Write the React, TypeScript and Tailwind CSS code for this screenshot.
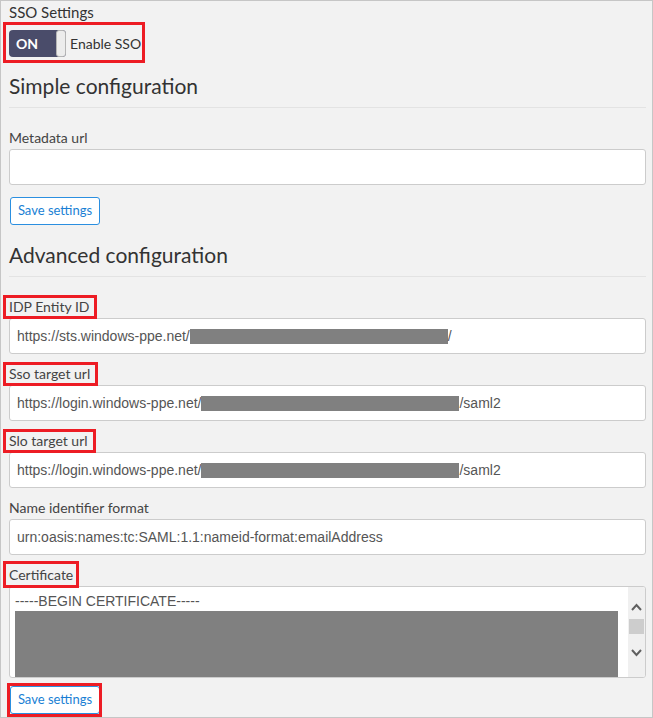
import type { ReactNode } from 'react';

const sans = { fontFamily: 'Lato, "Open Sans", sans-serif' };

// red annotation frame drawn over a label/control
const Mark = ({ children, className }: { children: ReactNode; className: string }) => (
  <span className="relative inline-flex">
    {children}
    <span className={`pointer-events-none absolute border-[3px] border-[#ed1c24] ${className}`} />
  </span>
);

const Redacted = ({ w }: { w: string }) => (
  <span className={`inline-block h-[15px] bg-[#808080] align-middle ${w}`} />
);

const fields = [
  { label: 'IDP Entity ID', prefix: 'https://sts.windows-ppe.net/', bar: 'w-[258px]', suffix: '/' },
  { label: 'Sso target url', prefix: 'https://login.windows-ppe.net/', bar: 'w-[258px]', suffix: '/saml2' },
  { label: 'Slo target url', prefix: 'https://login.windows-ppe.net/', bar: 'w-[258px]', suffix: '/saml2' },
];

const Label = ({ children }: { children: ReactNode }) => (
  <div className="h-[18px] text-[14px] leading-[18px] text-[#444]">{children}</div>
);

const Input = ({ children }: { children?: ReactNode }) => (
  <div
    className="mt-[2px] flex h-[36px] items-center rounded-[3px] border border-[#cccccc] bg-white pl-[7px] text-[14px] text-[#555]"
    style={{ fontFamily: '"Liberation Sans", Arial, sans-serif' }}
  >
    {children}
  </div>
);

export default function App() {
  return (
    <div
      className="box-border h-[718px] w-[653px] overflow-hidden border border-[#c6c6c6] bg-[#f2f2f2] pl-[8px] pr-[6px] pt-[1px] text-[#333]"
      style={sans}
    >
      <div className="text-[15px] leading-[20px] text-[#333]">SSO Settings</div>

      <div className="mt-[8px] flex">
        <Mark className="-left-[6px] -right-[4px] -top-[8px] -bottom-[6px]">
          <div className="flex items-center">
            <div className="flex h-[27px] w-[57px] items-stretch overflow-hidden rounded-[4px] bg-[#4a4c6a]">
              <span className="flex flex-1 items-center pl-[7px] text-[14px] font-bold text-white">ON</span>
              <span className="w-[10px] rounded-[3px] border border-[#b5b5b5] bg-[#ececec]" />
            </div>
            <span className="ml-[4px] text-[14px] text-[#333]">Enable SSO</span>
          </div>
        </Mark>
      </div>

      <h2 className="mt-[15px] text-[21px] leading-[28px] text-[#333]">Simple configuration</h2>
      <div className="mt-[7px] border-t border-[#e3e3e3]" />

      <div className="mt-[21px]">
        <Label>Metadata url</Label>
        <Input />
      </div>
      <button className="mt-[12px] ml-[1px] h-[28px] w-[90px] rounded-[3px] border border-[#2b8fe0] bg-white text-[13px] text-[#1a7fd4]">
        Save settings
      </button>

      <h2 className="mt-[16px] text-[21px] leading-[28px] text-[#333]">Advanced configuration</h2>
      <div className="mt-[7px] border-t border-[#e3e3e3]" />

      <div className="mt-[21px] flex flex-col gap-[11px]">
        {fields.map((f) => (
          <div key={f.label}>
            <Label>
              <Mark className="-left-[6px] -right-[8px] -top-[3px] -bottom-[3px]">
                <span>{f.label}</span>
              </Mark>
            </Label>
            <Input>
              <span>{f.prefix}</span>
              <Redacted w={f.bar} />
              <span>{f.suffix}</span>
            </Input>
          </div>
        ))}

        <div>
          <Label>
            Name identifier format
          </Label>
          <Input>urn:oasis:names:tc:SAML:1.1:nameid-format:emailAddress</Input>
        </div>

        <div>
          <Label>
            <Mark className="-left-[6px] -right-[6px] -top-[5px] -bottom-[4px]">
              <span>Certificate</span>
            </Mark>
          </Label>
          <div className="mt-[2px] flex h-[92px] overflow-hidden rounded-[3px] border border-[#cccccc] bg-white">
            <div
              className="flex-1 pl-[5px] pr-[10px] pt-[4px] text-[14px] leading-[20px] text-[#555]"
              style={{ fontFamily: '"Liberation Sans", Arial, sans-serif' }}
            >
              <div>-----BEGIN CERTIFICATE-----</div>
              <div className="h-[80px] bg-[#808080]" />
            </div>
            <div className="flex w-[17px] flex-col items-center bg-[#f0f0f0] pt-[16px]">
              <svg width="11" height="8" viewBox="0 0 11 8" fill="none" stroke="#606060" strokeWidth="2">
                <path d="M1 7l4.5-5L10 7" />
              </svg>
              <div className="mt-[8px] h-[15px] w-[15px] bg-[#cdcdcd]" />
              <svg className="mt-[15px]" width="11" height="8" viewBox="0 0 11 8" fill="none" stroke="#606060" strokeWidth="2">
                <path d="M1 1l4.5 5L10 1" />
              </svg>
            </div>
          </div>
        </div>
      </div>

      <div className="mt-[8px] flex">
        <Mark className="-left-[2px] -right-[2px] -top-[3px] -bottom-[3px]">
          <button className="ml-[1px] h-[28px] w-[90px] rounded-[3px] border border-[#2b8fe0] bg-white text-[13px] text-[#1a7fd4]">
            Save settings
          </button>
        </Mark>
      </div>
    </div>
  );
}
